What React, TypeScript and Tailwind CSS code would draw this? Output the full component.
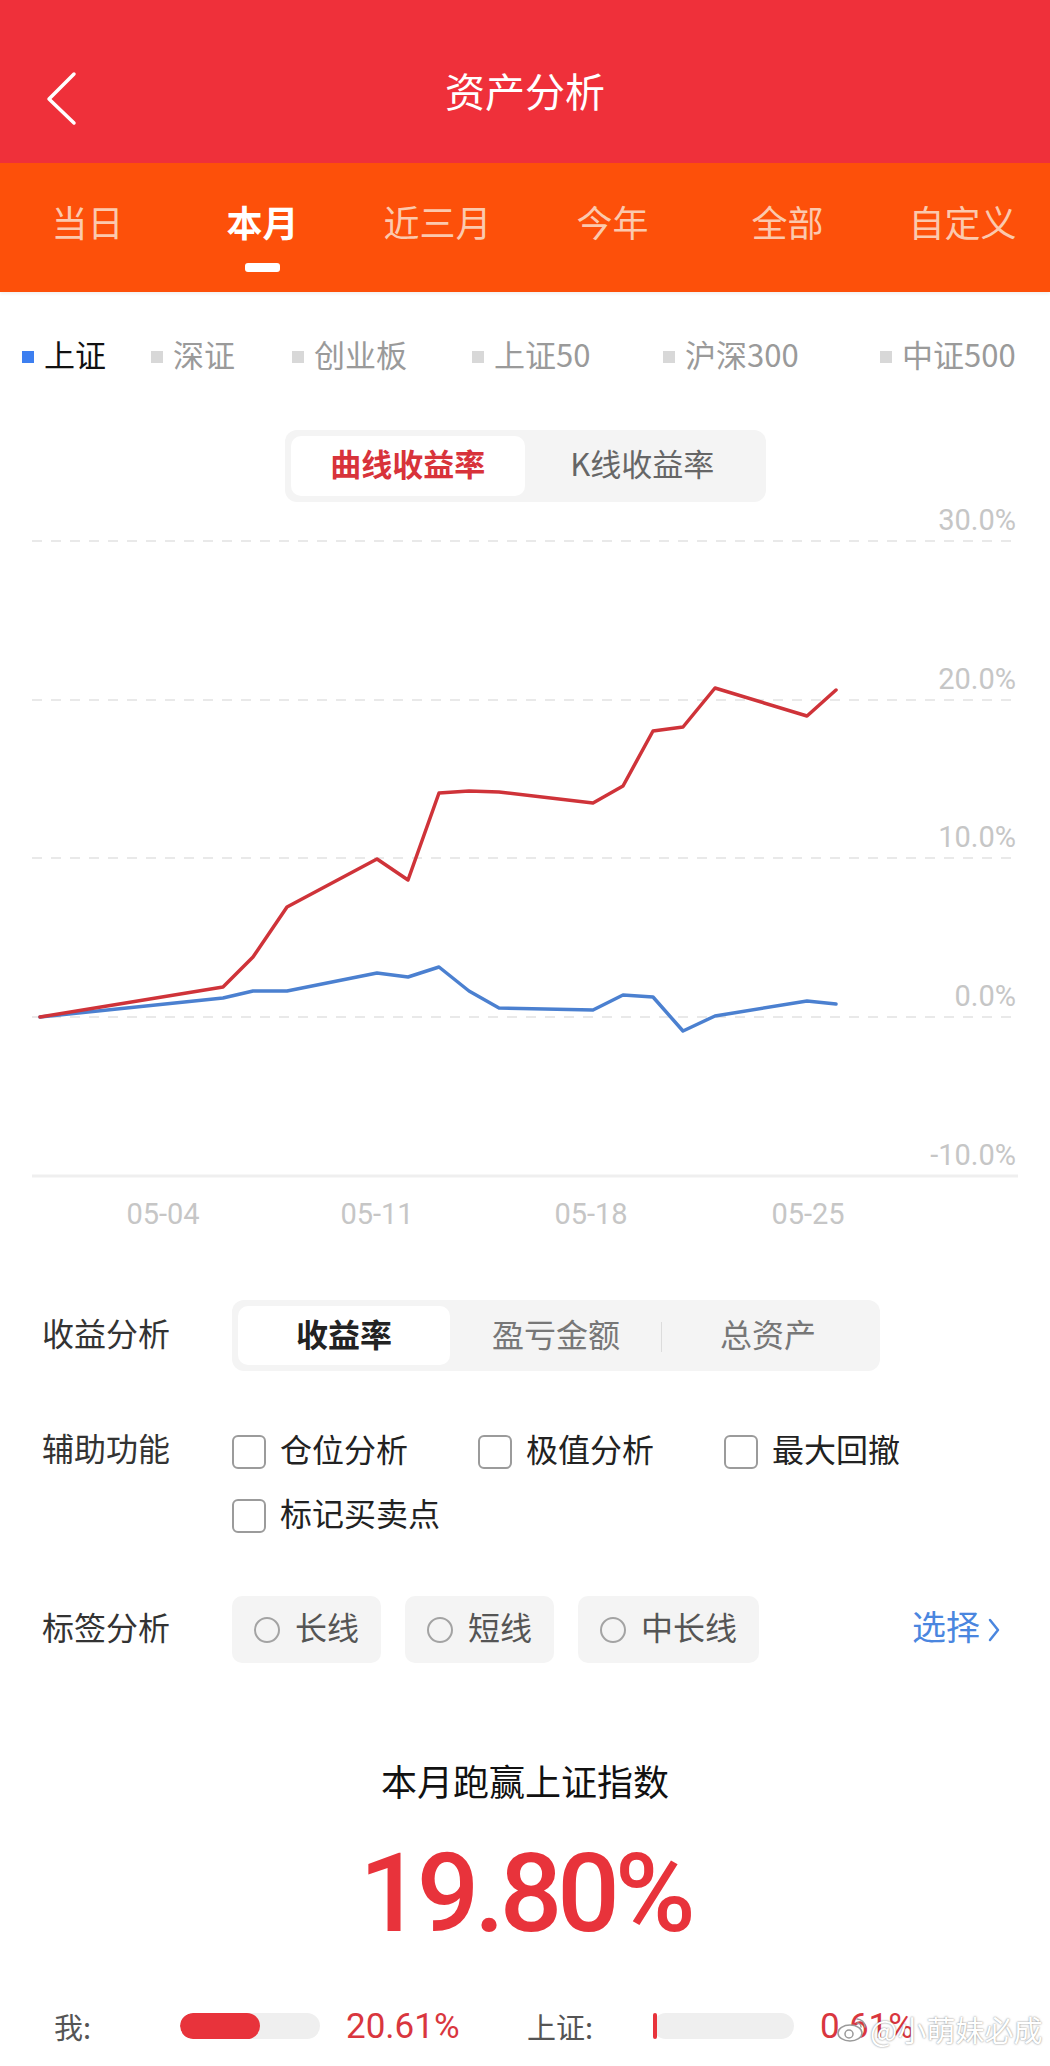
import React from 'react';

const tabs = ['当日', '本月', '近三月', '今年', '全部', '自定义'];
const legend = [
  { t: '上证', w: 'w-[129px]' },
  { t: '深证', w: 'w-[141px]' },
  { t: '创业板', w: 'w-[180px]' },
  { t: '上证50', w: 'w-[191px]' },
  { t: '沪深300', w: 'w-[217px]' },
  { t: '中证500', w: '' },
];

// chart coordinates, svg space (page y - 505)
const gridY = [
  { y: 36, label: '30.0%' },
  { y: 195, label: '20.0%' },
  { y: 353, label: '10.0%' },
  { y: 512, label: '0.0%' },
];
const mine = [
  [40, 512], [223, 482], [253, 452], [287, 402], [377, 354], [408, 375], [439, 288], [469, 286],
  [499, 287], [593, 298], [623, 281], [653, 226], [683, 222], [715, 183], [807, 211], [836, 185],
];
const index = [
  [40, 512], [223, 493], [253, 486], [287, 486], [377, 468], [408, 472], [439, 462], [469, 486],
  [499, 503], [593, 505], [623, 490], [653, 492], [683, 526], [715, 511], [807, 496], [836, 499],
];
const xLabels = [
  { x: 163, t: '05-04' },
  { x: 377, t: '05-11' },
  { x: 591, t: '05-18' },
  { x: 808, t: '05-25' },
];

const pts = (arr: number[][]) => arr.map((p) => p.join(',')).join(' ');

function Chart() {
  return (
    <svg className="block mt-[3px]" width={1050} height={735} viewBox="0 0 1050 735">
      {gridY.map((g) => (
        <g key={g.label}>
          <line x1={32} x2={1018} y1={g.y} y2={g.y} stroke="#e9e9e9" strokeWidth={2} strokeDasharray="10 9" />
          <text x={1016} y={g.y - 11} textAnchor="end" fontSize={29} fill="#c6c6c6" fontFamily="Roboto, sans-serif">
            {g.label}
          </text>
        </g>
      ))}
      <line x1={32} x2={1018} y1={671} y2={671} stroke="#efefef" strokeWidth={3} />
      <text x={1016} y={660} textAnchor="end" fontSize={29} fill="#c6c6c6" fontFamily="Roboto, sans-serif">
        -10.0%
      </text>
      {xLabels.map((l) => (
        <text key={l.t} x={l.x} y={719} textAnchor="middle" fontSize={29} fill="#c6c6c6" fontFamily="Roboto, sans-serif">
          {l.t}
        </text>
      ))}
      <polyline points={pts(index)} fill="none" stroke="#4b80d0" strokeWidth={3.5} strokeLinejoin="round" strokeLinecap="round" />
      <polyline points={pts(mine)} fill="none" stroke="#cf3339" strokeWidth={3.5} strokeLinejoin="round" strokeLinecap="round" />
    </svg>
  );
}

function Checkbox({ label }: { label: string }) {
  return (
    <div className="flex items-center gap-[14px] h-[34px]">
      <span className="w-[34px] h-[34px] rounded-[6px] border-2 border-[#9b9b9b] bg-white" />
      <span className="text-[32px] leading-none text-[#222] pb-[8px]">{label}</span>
    </div>
  );
}

function Chip({ label }: { label: string }) {
  return (
    <div className="h-[67px] rounded-[10px] bg-[#f4f4f4] px-[22px] flex items-center gap-[15px]">
      <span className="w-[26px] h-[26px] rounded-full border-2 border-[#a3a3a3]" />
      <span className="text-[32px] leading-none text-[#555] pb-[8px]">{label}</span>
    </div>
  );
}

export default function App() {
  return (
    <div className="relative w-[1050px] min-h-[2066px] bg-white overflow-hidden font-['Noto_Sans_CJK_SC',sans-serif]">
      {/* header */}
      <header className="relative h-[163px] bg-[#ef303a] flex items-center justify-center pt-[16px]">
        <svg className="absolute left-[44px] top-[70px]" width={36} height={58} viewBox="0 0 36 58">
          <path d="M30 4 L5 29 L30 53" fill="none" stroke="#fff" strokeWidth={3.5} strokeLinecap="round" strokeLinejoin="round" />
        </svg>
        <h1 className="text-[40px] leading-none text-white">资产分析</h1>
      </header>

      {/* period tabs */}
      <nav className="grid grid-cols-6 h-[129px] bg-[#fd500a] shadow-[0_2px_3px_rgba(0,0,0,0.06)]">
        {tabs.map((t) => {
          const active = t === '本月';
          return (
            <div key={t} className="flex flex-col items-center pt-[40px]">
              <span className={active ? 'text-[36px] leading-none text-white font-bold' : 'text-[36px] leading-none text-[#fbc9ae]'}>
                {t}
              </span>
              {active && <span className="mt-[24px] w-[35px] h-[9px] rounded-[3px] bg-white" />}
            </div>
          );
        })}
      </nav>

      {/* legend */}
      <div className="flex pl-[22px] pt-[46px]">
        {legend.map((l, i) => (
          <div key={l.t} className={`flex items-center gap-[10px] ${l.w}`}>
            <span className={i === 0 ? 'w-[12px] h-[12px] bg-[#3d7ff0]' : 'w-[12px] h-[12px] bg-[#d8d8d8]'} />
            <span className={i === 0 ? 'text-[31px] leading-none text-[#111] pb-[6px]' : 'text-[31px] leading-none text-[#9a9a9a] pb-[6px]'}>{l.t}</span>
          </div>
        ))}
      </div>

      {/* chart type switch */}
      <div className="mx-auto mt-[55px] w-[481px] h-[72px] rounded-[12px] bg-[#f4f4f4] p-[6px] grid grid-cols-2">
        <div className="bg-white rounded-[10px] flex items-center justify-center pb-[6px] text-[31px] font-bold text-[#d8333a]">曲线收益率</div>
        <div className="flex items-center justify-center pb-[6px] text-[31px] text-[#666]">K线收益率</div>
      </div>

      <Chart />

      {/* 收益分析 */}
      <div className="flex items-center pl-[42px] mt-[60px]">
        <div className="w-[190px] text-[32px] leading-none text-[#333] pb-[8px]">收益分析</div>
        <div className="w-[648px] h-[71px] rounded-[12px] bg-[#f4f4f4] p-[6px] grid grid-cols-3">
          <div className="bg-white rounded-[10px] flex items-center justify-center pb-[6px] text-[32px] font-bold text-[#222]">收益率</div>
          <div className="relative flex items-center justify-center pb-[6px] text-[32px] text-[#777]">
            盈亏金额
            <span className="absolute right-0 top-[16px] h-[30px] w-px bg-[#dcdcdc]" />
          </div>
          <div className="flex items-center justify-center pb-[6px] text-[32px] text-[#777]">总资产</div>
        </div>
      </div>

      {/* 辅助功能 */}
      <div className="flex pl-[42px] mt-[64px]">
        <div className="w-[190px] h-[34px] flex items-center text-[32px] leading-none text-[#333] pb-[10px]">辅助功能</div>
        <div className="grid grid-cols-[246px_246px_auto] gap-y-[30px]">
          <Checkbox label="仓位分析" />
          <Checkbox label="极值分析" />
          <Checkbox label="最大回撤" />
          <Checkbox label="标记买卖点" />
        </div>
      </div>

      {/* 标签分析 */}
      <div className="flex items-center pl-[42px] pr-[49px] mt-[63px]">
        <div className="w-[190px] text-[32px] leading-none text-[#333] pb-[8px]">标签分析</div>
        <div className="flex gap-[24px]">
          <Chip label="长线" />
          <Chip label="短线" />
          <Chip label="中长线" />
        </div>
        <div className="ml-auto flex items-center gap-[7px] text-[34px] leading-none text-[#4a86df]">
          <span className="pb-[8px]">选择</span>
          <svg width={14} height={26} viewBox="0 0 14 26">
            <path d="M3 3 L11 13 L3 23" fill="none" stroke="#4a86df" strokeWidth={2.5} strokeLinecap="round" strokeLinejoin="round" />
          </svg>
        </div>
      </div>

      {/* summary */}
      <div className="mt-[99px] text-center text-[36px] leading-none text-[#111]">本月跑赢上证指数</div>
      <div className="mt-[41px] text-center text-[110px] leading-none font-medium tracking-[-5px] text-[#e8333b] font-['Roboto',sans-serif]">
        19.80%
      </div>

      <div className="mt-[63px] h-[28px] flex items-center pl-[54px]">
        <span className="w-[126px] text-[29px] leading-none text-[#555]">我:</span>
        <span className="w-[140px] h-[26px] rounded-full bg-[#efefef] overflow-hidden">
          <span className="block w-[80px] h-full rounded-full bg-[#e8333b]" />
        </span>
        <span className="ml-[26px] w-[181px] text-[35px] leading-none text-[#d9363e] font-['Roboto',sans-serif]">20.61%</span>
        <span className="w-[126px] text-[29px] leading-none text-[#555]">上证:</span>
        <span className="w-[141px] h-[26px] rounded-full bg-[#efefef]">
          <span className="block w-[4px] h-full rounded-[2px] bg-[#e8333b]" />
        </span>
        <span className="ml-[26px] text-[35px] leading-none text-[#d9363e] font-['Roboto',sans-serif]">0.61%</span>
      </div>

      {/* watermark */}
      <div className="absolute left-[836px] top-[2014px] flex items-center gap-[2px] whitespace-nowrap text-[29px] leading-none text-white [text-shadow:0_0_2px_rgba(0,0,0,0.55)]">
        <svg width={32} height={30} viewBox="0 0 32 30">
          <ellipse cx={14} cy={19} rx={12} ry={8} fill="#fff" stroke="#9a9a9a" strokeWidth={1.5} />
          <circle cx={13} cy={20} r={4} fill="none" stroke="#9a9a9a" strokeWidth={1.5} />
          <path d="M21 5 A8 8 0 0 1 29 13" fill="none" stroke="#9a9a9a" strokeWidth={1.5} strokeLinecap="round" />
          <path d="M21 9 A4 4 0 0 1 25 13" fill="none" stroke="#9a9a9a" strokeWidth={1.5} strokeLinecap="round" />
        </svg>
        <span>@小萌妹必成</span>
      </div>
    </div>
  );
}
